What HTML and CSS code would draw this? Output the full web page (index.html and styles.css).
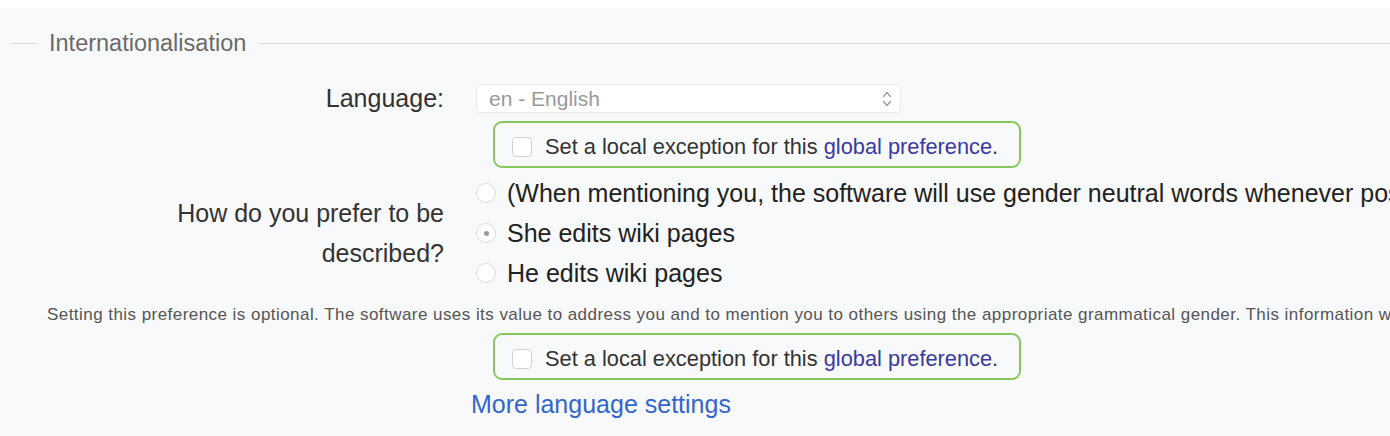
FILE: index.html
```html
<!DOCTYPE html>
<html lang="en">
<head>
<meta charset="utf-8">
<title>Preferences</title>
<link rel="stylesheet" href="styles.css">
</head>
<body>
<div class="page">
  <div class="legend">
    <span class="legend-line short"></span>
    <span class="legend-text">Internationalisation</span>
    <span class="legend-line long"></span>
  </div>

  <div class="field lang-row">
    <div class="label">Language:</div>
    <div class="control">
      <div class="select">
        <span class="select-value">en - English</span>
        <svg class="select-arrows" width="10" height="18" viewBox="0 0 10 18"><path d="M1.5 6.5 L5 2.5 L8.5 6.5 M1.5 11.5 L5 15.5 L8.5 11.5" fill="none" stroke="#9a9a9a" stroke-width="1.3" stroke-linecap="round" stroke-linejoin="round"/></svg>
      </div>
    </div>
  </div>

  <div class="field exc-row">
    <div class="label"></div>
    <div class="control">
      <label class="exception">
        <span class="checkbox"></span>
        <span class="exc-text">Set a local exception for this <a class="gpref" href="#">global preference</a>.</span>
      </label>
    </div>
  </div>

  <div class="field gender-row">
    <div class="label">How do you prefer to be described?</div>
    <div class="control options">
      <div class="option"><span class="radio"></span><span class="opt-text">(When mentioning you, the software will use gender neutral words whenever possible)</span></div>
      <div class="option"><span class="radio checked"></span><span class="opt-text">She edits wiki pages</span></div>
      <div class="option"><span class="radio"></span><span class="opt-text">He edits wiki pages</span></div>
    </div>
  </div>

  <p class="help">Setting this preference is optional. The software uses its value to address you and to mention you to others using the appropriate grammatical gender. This information will be public.</p>

  <div class="field exc-row2">
    <div class="label"></div>
    <div class="control">
      <label class="exception">
        <span class="checkbox"></span>
        <span class="exc-text">Set a local exception for this <a class="gpref" href="#">global preference</a>.</span>
      </label>
    </div>
  </div>

  <div class="field more-row">
    <div class="label"></div>
    <div class="control">
      <a class="more" href="#">More language settings</a>
    </div>
  </div>
</div>
</body>
</html>
```

FILE: styles.css
```css
html, body {
  margin: 0;
  padding: 0;
  background: #ffffff;
  overflow: hidden;
}
body {
  font-family: "Liberation Sans", Arial, sans-serif;
  color: #333;
}
.page {
  margin-top: 8px;
  background: #f8f9fa;
  height: 428px;
  padding: 20px 0 0 12px;
  box-sizing: border-box;
  white-space: nowrap;
}
.legend {
  display: flex;
  align-items: center;
  height: 30px;
}
.legend-line {
  height: 1px;
  background: #d4d6d9;
}
.legend-line.short { width: 24px; }
.legend-line.long { flex: 1; }
.legend-text {
  font-size: 23.5px;
  color: #6a6a6a;
  margin: 0 13px;
  line-height: 30px;
}
.field {
  display: grid;
  grid-template-columns: 432px 1fr;
  column-gap: 32px;
  align-items: center;
}
.label {
  text-align: right;
  font-size: 25px;
  color: #333;
  white-space: normal;
}
.lang-row { margin-top: 26px; }
.select {
  width: 425px;
  height: 29px;
  box-sizing: border-box;
  background: #fff;
  border: 1px solid #ececec;
  border-radius: 4px;
  display: flex;
  align-items: center;
  justify-content: space-between;
  padding: 0 8px 0 12px;
}
.select-value {
  font-size: 21px;
  color: #999;
}
.exc-row { margin-top: 8px; }
.exc-row2 { margin-top: 8px; }
.exception {
  margin-left: 17px;
  width: 528px;
  height: 47px;
  box-sizing: border-box;
  border: 2px solid #86c85e;
  border-radius: 9px;
  display: flex;
  align-items: center;
  padding: 5px 0 0 17px;
}
.checkbox {
  width: 20px;
  height: 20px;
  box-sizing: border-box;
  background: #fff;
  border: 1px solid #d2d2d2;
  border-radius: 4px;
  margin-right: 13px;
}
.exc-text {
  font-size: 21.8px;
  color: #333;
}
.gpref {
  color: #3a3a9e;
  text-decoration: none;
}
.gender-row { margin-top: 5px; }
.gender-row .label {
  line-height: 40px;
  padding-left: 160px;
}
.option {
  display: flex;
  align-items: center;
  height: 40px;
}
.radio {
  width: 20px;
  height: 20px;
  box-sizing: border-box;
  border: 1px solid #dcdcdc;
  background: #fff;
  border-radius: 50%;
  margin-right: 11px;
  display: flex;
  align-items: center;
  justify-content: center;
  flex: none;
}
.radio.checked::after {
  content: "";
  width: 5px;
  height: 5px;
  border-radius: 50%;
  background: #9a9a9a;
}
.opt-text {
  font-size: 25px;
  color: #222;
}
.help {
  margin: 12px 0 0 35px;
  font-size: 17px;
  letter-spacing: 0.45px;
  line-height: 20px;
  color: #555;
}
.more-row { margin-top: 9px; }
.more {
  margin-left: -5px;
  font-size: 25px;
  line-height: 30px;
  color: #3366cc;
  text-decoration: none;
}
```
